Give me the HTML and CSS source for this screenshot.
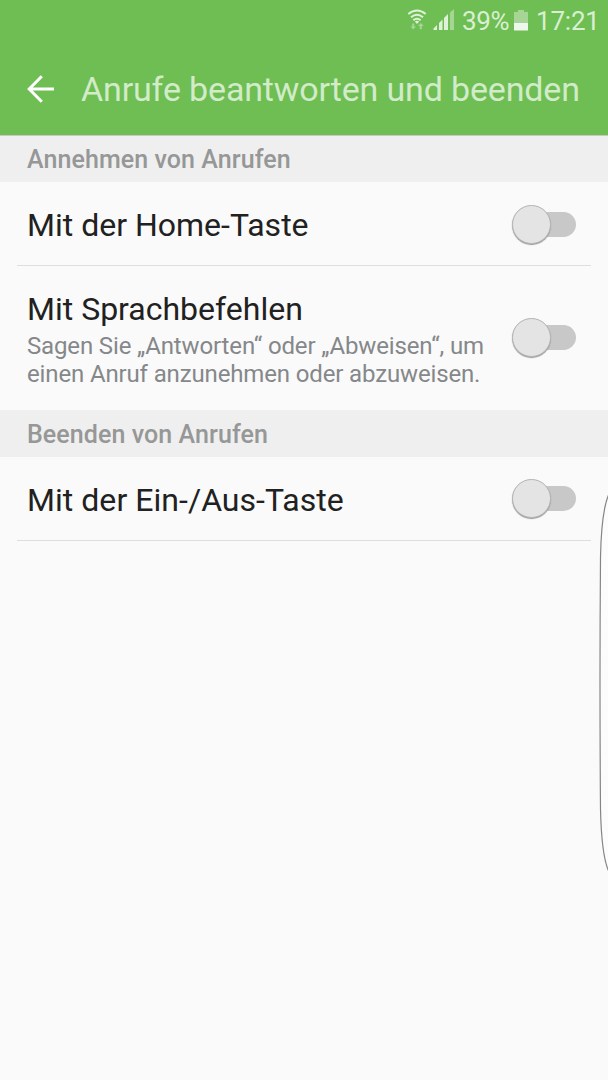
FILE: index.html
```html
<!DOCTYPE html>
<html lang="de">
<head>
<meta charset="utf-8">
<title>Anrufe beantworten und beenden</title>
<link rel="stylesheet" href="styles.css">
</head>
<body>
<header class="header">
  <div class="status">
    <svg class="wifi" width="20" height="22" viewBox="0 0 20 22" fill="none" stroke="#e0f1d9" stroke-width="2">
      <path d="M1.300 5Q10 -2 18.700 5M4 8.300Q10 3.200 16 8.300M6.300 11.300Q10 8.200 13.700 11.300"/>
      <path d="M7.800 12.600Q10 11 12.200 12.600L10 15z" fill="#e0f1d9" stroke="none"/>
      <path d="M5.200 14.500h2v3.100h1.900l-2.900 3-2.900-3h1.900zM12.800 20.300v-3.200h-1.900l2.900-3 2.900 3h-1.900v3.200z" fill="#a6d595" stroke="none"/>
    </svg>
    <svg class="signal" width="22" height="22" viewBox="0 0 22 22" fill="#e0f1d9">
      <path d="M.5 21v-1.500l3.500-3.500v5zM6 21v-7l3.500-3.500v10.500zM11 21v-12l4-4v16z"/>
      <path d="M17 21v-17.500l4-3.500v21z" fill="#a6d595"/>
    </svg>
    <span class="percent">39%</span>
    <svg class="battery" width="14" height="21" viewBox="0 0 14 21">
      <path d="M0 2h4v-2h6v2h4v11h-14z" fill="#a6d595"/>
      <path d="M0 13h14v7.500h-14z" fill="#eef7eb"/>
    </svg>
    <span class="clock">17:21</span>
  </div>
  <div class="toolbar">
    <svg class="back" width="28" height="28" viewBox="0 0 28 28" fill="none" stroke="#fff" stroke-width="3">
      <path d="M14.800 1.200L2.200 14l12.600 12.800M2.500 14H27"/>
    </svg>
    <h1 class="title">Anrufe beantworten und beenden</h1>
  </div>
</header>
<main>
  <h2 class="section">Annehmen von Anrufen</h2>
  <div class="row">
    <div class="label">Mit der Home-Taste</div>
    <div class="switch"><div class="thumb"></div></div>
  </div>
  <div class="row row-tall">
    <div class="texts">
      <div class="label">Mit Sprachbefehlen</div>
      <p class="summary">Sagen Sie „Antworten“ oder „Abweisen“, um<br>einen Anruf anzunehmen oder abzuweisen.</p>
    </div>
    <div class="switch switch-raised"><div class="thumb"></div></div>
  </div>
  <h2 class="section section-end">Beenden von Anrufen</h2>
  <div class="row">
    <div class="label label-end">Mit der Ein-/Aus-Taste</div>
    <div class="switch switch-raised"><div class="thumb"></div></div>
  </div>
</main>
<svg class="edge" width="9" height="380" viewBox="0 0 9 380" fill="none" stroke="#858585" stroke-width="1.200">
  <path d="M10 1Q2.500 17 1.500 64Q.5 190 1.500 316Q2.500 363 10 379" fill="#fcfcfc"/>
</svg>
</body>
</html>
```
FILE: styles.css
```css
* { box-sizing: border-box; }
body {
  margin: 0;
  height: 1080px;
  overflow: hidden;
  background: #fafafa;
  font-family: Roboto, "Liberation Sans", sans-serif;
}
.header {
  height: 136px;
  background: #6ebe53;
  border-bottom: 1px solid #c5c8c4;
}
.status {
  display: flex;
  justify-content: flex-end;
  height: 43px;
  padding: 8px 9px 0 0;
  color: #daefd2;
  font-size: 26px;
  line-height: 26px;
}
.wifi { margin: 1px 6px 0 0; }
.signal { margin: 1px 7px 0 0; }
.percent { width: 49px; letter-spacing: -0.3px; white-space: nowrap; }
.battery { margin: 2px 8px 0 3px; }
.clock { width: 63px; letter-spacing: -0.2px; white-space: nowrap; }
.toolbar {
  display: flex;
  align-items: center;
  height: 92px;
  padding-left: 27px;
}
.title {
  margin: 0 0 0 26px;
  color: #d2ebc9;
  font-size: 34px;
  font-weight: 400;
  letter-spacing: -0.15px;
  white-space: nowrap;
}
.section {
  height: 46px;
  margin: 0;
  padding-left: 27px;
  background: #efefef;
  color: #969797;
  font-size: 25px;
  font-weight: 500;
  letter-spacing: 0.08px;
  line-height: 48px;
}
.section-end { height: 47px; line-height: 50px; }
.row {
  display: flex;
  align-items: center;
  justify-content: space-between;
  height: 84px;
  margin: 0 17px;
  padding: 2px 15px 0 10px;
  border-bottom: 1px solid #dedede;
}
.row-tall { height: 144px; padding-top: 0; border-bottom: 0; }
.label {
  color: #212121;
  font-size: 32px;
  line-height: 40px;
  white-space: nowrap;
}
.label-end { letter-spacing: 0.04px; }
.summary {
  margin: 3px 0 0;
  color: #85888a;
  font-size: 24px;
  letter-spacing: -0.14px;
  line-height: 28px;
  white-space: nowrap;
}
.switch {
  display: flex;
  align-items: center;
  width: 62px;
  height: 25px;
  border-radius: 13px;
  background: #c8c8c8;
}
.switch-raised { margin-bottom: 2px; }
.thumb {
  flex: none;
  width: 39px;
  height: 39px;
  margin-left: -2px;
  border: 1px solid #b5b5b5;
  border-radius: 50%;
  background: #e4e4e4;
  box-shadow: 0 1px 1px #999;
}
.edge {
  position: absolute;
  right: 0;
  top: 493px;
}
```
